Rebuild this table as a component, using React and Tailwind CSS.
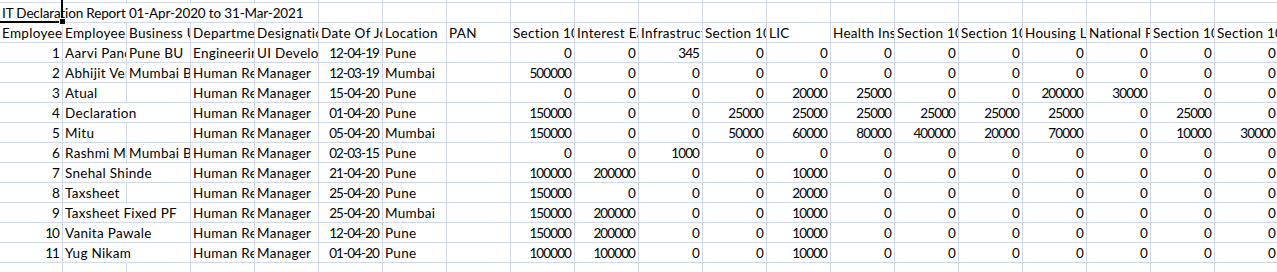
const headers = [
  'Employee Code',
  'Employee Name',
  'Business Unit',
  'Department',
  'Designation',
  'Date Of Joining',
  'Location',
  'PAN',
  'Section 10(13A)',
  'Interest Earned',
  'Infrastructure Bonds',
  'Section 10(14)',
  'LIC',
  'Health Insurance',
  'Section 10(5)',
  'Section 10(10)',
  'Housing Loan',
  'National Pension',
  'Section 10(17)',
  'Section 10(26)',
];

const rows = [
  { id: 1, name: 'Aarvi Pandey', bu: 'Pune BU', dept: 'Engineering', desig: 'UI Developer', doj: '12-04-19', loc: 'Pune', vals: [0, 0, 345, 0, 0, 0, 0, 0, 0, 0, 0, 0] },
  { id: 2, name: 'Abhijit Verma', bu: 'Mumbai BU', dept: 'Human Resource', desig: 'Manager', doj: '12-03-19', loc: 'Mumbai', vals: [500000, 0, 0, 0, 0, 0, 0, 0, 0, 0, 0, 0] },
  { id: 3, name: 'Atual', bu: '', dept: 'Human Resource', desig: 'Manager', doj: '15-04-20', loc: 'Pune', vals: [0, 0, 0, 0, 20000, 25000, 0, 0, 200000, 30000, 0, 0] },
  { id: 4, name: 'Declaration', span: true, dept: 'Human Resource', desig: 'Manager', doj: '01-04-20', loc: 'Pune', vals: [150000, 0, 0, 25000, 25000, 25000, 25000, 25000, 25000, 0, 25000, 0] },
  { id: 5, name: 'Mitu', bu: '', dept: 'Human Resource', desig: 'Manager', doj: '05-04-20', loc: 'Mumbai', vals: [150000, 0, 0, 50000, 60000, 80000, 400000, 20000, 70000, 0, 10000, 30000] },
  { id: 6, name: 'Rashmi M. More', bu: 'Mumbai BU', dept: 'Human Resource', desig: 'Manager', doj: '02-03-15', loc: 'Pune', vals: [0, 0, 1000, 0, 0, 0, 0, 0, 0, 0, 0, 0] },
  { id: 7, name: 'Snehal Shinde', span: true, dept: 'Human Resource', desig: 'Manager', doj: '21-04-20', loc: 'Pune', vals: [100000, 200000, 0, 0, 10000, 0, 0, 0, 0, 0, 0, 0] },
  { id: 8, name: 'Taxsheet', bu: '', dept: 'Human Resource', desig: 'Manager', doj: '25-04-20', loc: 'Pune', vals: [150000, 0, 0, 0, 20000, 0, 0, 0, 0, 0, 0, 0] },
  { id: 9, name: 'Taxsheet Fixed PF', span: true, dept: 'Human Resource', desig: 'Manager', doj: '25-04-20', loc: 'Mumbai', vals: [150000, 200000, 0, 0, 10000, 0, 0, 0, 0, 0, 0, 0] },
  { id: 10, name: 'Vanita Pawale', span: true, dept: 'Human Resource', desig: 'Manager', doj: '12-04-20', loc: 'Pune', vals: [150000, 200000, 0, 0, 10000, 0, 0, 0, 0, 0, 0, 0] },
  { id: 11, name: 'Yug Nikam', span: true, dept: 'Human Resource', desig: 'Manager', doj: '01-04-20', loc: 'Pune', vals: [100000, 100000, 0, 0, 10000, 0, 0, 0, 0, 0, 0, 0] },
];

const grid = 'grid grid-cols-[63px_repeat(19,64px)]';
const line = 'border-r border-b border-[#d0d7e5]';

// numbers sit right, narrow figures; text sits left, slightly wider
const Cell = ({ children, num, span }) => (
  <div
    className={`${line} h-[20px] overflow-hidden whitespace-nowrap leading-[20px] ${
      num ? 'text-right pr-[3px] tracking-[-0.9px]' : 'pl-[2px] tracking-[0.3px]'
    } ${span ? 'col-span-2' : ''}`}
  >
    {children}
  </div>
);

const EmptyRow = ({ height }) => (
  <div className={grid}>
    {headers.map((h) => (
      <div key={h} className={`${line} ${height}`} />
    ))}
  </div>
);

export default function App() {
  return (
    <div className="w-[1277px] h-[272px] overflow-hidden bg-white text-black font-['Lato',sans-serif] text-[13.5px]">
      <EmptyRow height="h-[3px]" />

      {/* title row, A1 selected */}
      <div className={grid}>
        <div className={`${line} relative col-span-5 h-[20px] pl-[2px] leading-[20px] tracking-[-0.15px] whitespace-nowrap`}>
          IT Declaration Report 01-Apr-2020 to 31-Mar-2021
          <div className="absolute left-0 top-[-3px] w-[63px] h-[23px] border-r-2 border-b-2 border-black" />
          <div className="absolute left-[59px] top-[15px] w-[7px] h-[7px] bg-black border border-white" />
        </div>
        {headers.slice(5).map((h) => (
          <Cell key={h} />
        ))}
      </div>

      <div className={grid}>
        {headers.map((h) => (
          <Cell key={h}>{h}</Cell>
        ))}
      </div>

      {rows.map((r) => (
        <div key={r.id} className={grid}>
          <Cell num>{r.id}</Cell>
          <Cell span={r.span}>{r.name}</Cell>
          {!r.span && <Cell>{r.bu}</Cell>}
          <Cell>{r.dept}</Cell>
          <Cell>{r.desig}</Cell>
          <Cell num>{r.doj}</Cell>
          <Cell>{r.loc}</Cell>
          <Cell />
          {r.vals.map((v, i) => (
            <Cell key={i} num>
              {v}
            </Cell>
          ))}
        </div>
      ))}

      <EmptyRow height="h-[20px]" />
    </div>
  );
}
